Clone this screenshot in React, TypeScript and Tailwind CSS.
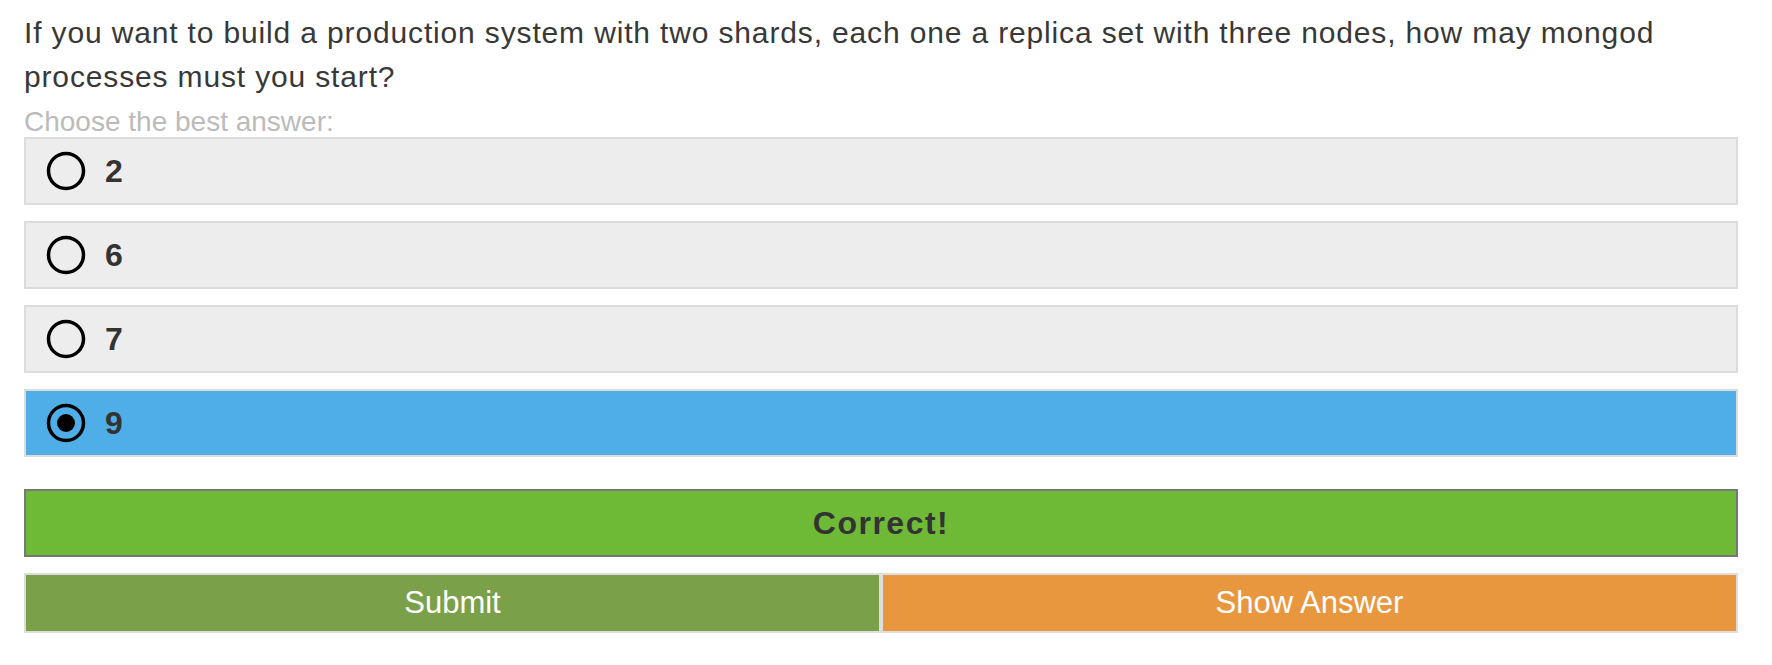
import React from "react";

interface IOption {
    label: string,
    selected: boolean,
}

const options: IOption[] = [
    { label: "2", selected: false },
    { label: "6", selected: false },
    { label: "7", selected: false },
    { label: "9", selected: true },
];

const Radio = ({ checked }: { checked: boolean }): JSX.Element => (
    <svg width="40" height="40" viewBox="0 0 40 40" className="shrink-0">
        <circle cx="20" cy="20" r="17.5" fill="none" stroke="#000" strokeWidth="3.5" />
        {checked && <circle cx="20" cy="20" r="9" fill="#000" />}
    </svg>
);

const App: React.FC = (): JSX.Element => {
    return (
        <div className="min-h-screen bg-white pl-[24px] pr-[34px] pt-[11px] font-['Liberation_Sans',Arial,sans-serif]">
            <div className="text-[30px] leading-[44px] tracking-[0.85px] text-[#383838]">
                If you want to build a production system with two shards, each one a replica set with three nodes, how may mongod processes must you start?
            </div>
            <div className="mt-[7px] text-[28px] leading-[31px] text-[#bbbbbb]">
                Choose the best answer:
            </div>

            <div className="flex flex-col gap-[16px]">
                {options.map((opt: IOption, index: number) => (
                    <div
                        key={index}
                        className={`flex h-[68px] items-center gap-[19px] border-2 border-[#dcdcdc] pl-[20px] ${opt.selected ? 'bg-[#4faee7]' : 'bg-[#ededed]'}`}
                    >
                        <Radio checked={opt.selected} />
                        <span className="text-[32px] font-bold text-[#333]">{opt.label}</span>
                    </div>
                ))}
            </div>

            <div className="mt-[32px] flex h-[68px] items-center justify-center border-2 border-[#777777] bg-[#6eba36]">
                <span className="text-[32px] font-bold tracking-[1.5px] text-[#333]">Correct!</span>
            </div>

            <div className="mt-[16px] flex h-[60px]">
                <button className="flex flex-1 items-center justify-center border-2 border-[#dddddd] bg-[#7aa149] text-[31px] text-white">
                    Submit
                </button>
                <button className="flex flex-1 items-center justify-center border-2 border-[#dddddd] bg-[#e8973f] text-[31px] text-white">
                    Show Answer
                </button>
            </div>
        </div>
    );
};

export default App;
